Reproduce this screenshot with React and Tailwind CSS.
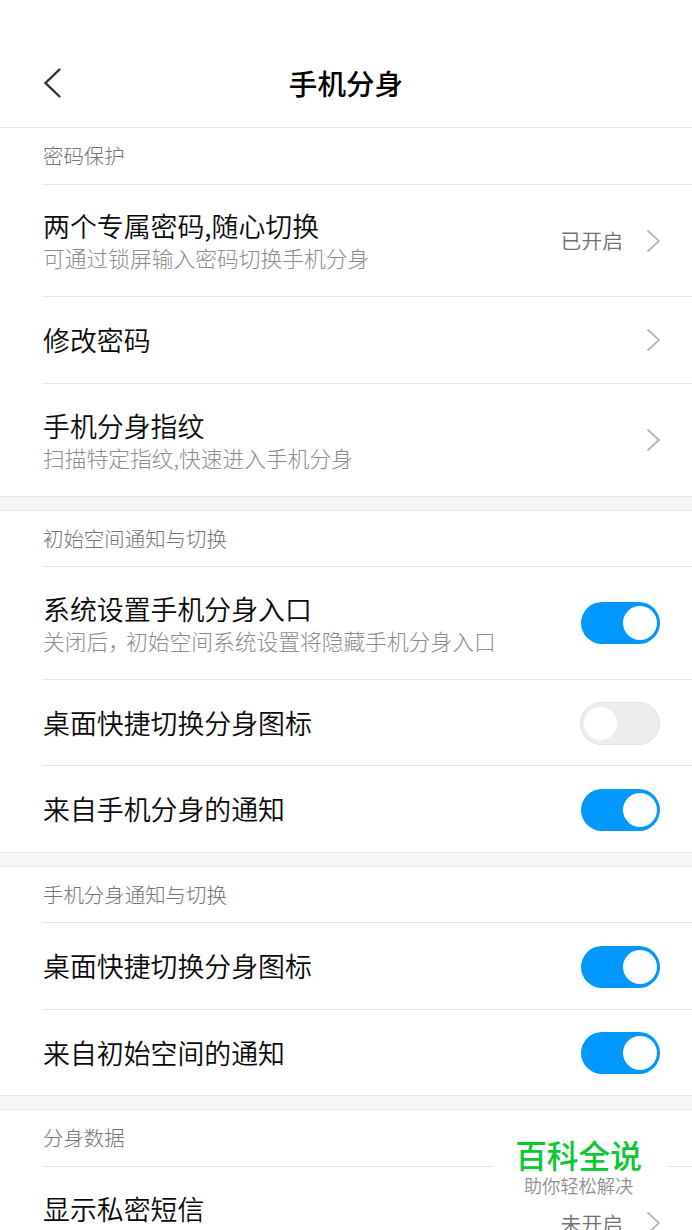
import clsx from 'clsx'

const sections = [
  {
    title: '密码保护',
    height: 'h-[57px]',
    rows: [
      { label: '两个专属密码,随心切换', hint: '可通过锁屏输入密码切换手机分身', value: '已开启', height: 'h-[112px]' },
      { label: '修改密码', height: 'h-[87px]' },
      { label: '手机分身指纹', hint: '扫描特定指纹,快速进入手机分身', height: 'h-[112px]' },
    ],
  },
  {
    title: '初始空间通知与切换',
    height: 'h-[56px]',
    rows: [
      { label: '系统设置手机分身入口', hint: '关闭后，初始空间系统设置将隐藏手机分身入口', on: true, height: 'h-[113px]' },
      { label: '桌面快捷切换分身图标', on: false, height: 'h-[86px]' },
      { label: '来自手机分身的通知', on: true, height: 'h-[86px]' },
    ],
  },
  {
    title: '手机分身通知与切换',
    height: 'h-[56px]',
    rows: [
      { label: '桌面快捷切换分身图标', on: true, height: 'h-[87px]' },
      { label: '来自初始空间的通知', on: true, height: 'h-[85px]' },
    ],
  },
  {
    title: '分身数据',
    height: 'h-[57px]',
    rows: [{ label: '显示私密短信', value: '未开启', height: 'h-[112px]', alignTop: true }],
  },
]

function Chevron() {
  return (
    <svg className="w-[14px] h-6 shrink-0" viewBox="0 0 14 24" fill="none" stroke="#b4b4b4" strokeWidth="1.8">
      <path d="M1.5 1.5 L13 12 L1.5 22.5" />
    </svg>
  )
}

function Toggle({ on, className }) {
  return (
    <span
      role="switch"
      aria-checked={on}
      className={clsx(
        'flex items-center shrink-0 rounded-full',
        on
          ? 'w-[79px] h-[42px] justify-end bg-[#0098ff] pr-[3px]'
          : 'w-20 h-[43px] justify-start bg-[#ededed] border border-[#dfdfdf] pl-[3px]',
        className
      )}
    >
      <span className={clsx('rounded-full bg-white', on ? 'size-[34px]' : 'size-[33px]')} />
    </span>
  )
}

// the full-width comma takes a little less than one em in the hints
function Hint({ text }) {
  const [head, tail] = text.split('，')
  return (
    <p className="text-[21.75px] leading-8 font-light text-[#8c8c8c]">
      {head}
      {tail && <span className="-mr-1">，</span>}
      {tail}
    </p>
  )
}

function Row({ row, last }) {
  const isToggle = row.on !== undefined
  return (
    <div
      className={clsx(
        'flex items-center ml-[42px] pr-8 border-[#e4e4e4]',
        row.height,
        !last && 'border-b'
      )}
    >
      <div className={clsx('flex-1 whitespace-nowrap pl-px', row.hint && 'pt-[3px]')}>
        <p className={clsx('text-[26.9px] leading-8 text-[#0a0a0a]', row.alignTop && '-mt-[28px]')}>{row.label}</p>
        {row.hint && <Hint text={row.hint} />}
      </div>
      {row.value && <span className="-mt-px mr-[23px] text-[20.8px] leading-8 text-[#707070]">{row.value}</span>}
      {isToggle ? <Toggle on={row.on} className={row.hint ? 'mt-0' : 'mt-px'} /> : <Chevron />}
    </div>
  )
}

function Section({ section }) {
  return (
    <section>
      <h2
        className={clsx(
          'flex items-center ml-[42px] pl-px pb-[2px] border-b border-[#e4e4e4] text-[20.45px] leading-8 font-light text-[#747474]',
          section.height
        )}
      >
        {section.title}
      </h2>
      {section.rows.map((row, i) => (
        <Row key={row.label} row={row} last={i === section.rows.length - 1} />
      ))}
    </section>
  )
}

function Watermark() {
  return (
    <div className="absolute left-[494px] top-[1128px] w-[173px] h-[78px] bg-white flex flex-col items-center pt-2 pr-[4px]">
      <span className="text-[31.7px] leading-[37px] font-medium text-[#0bc933]">百科全说</span>
      <span className="text-[18.3px] leading-[25px] text-[#8f8f8f]">助你轻松解决</span>
    </div>
  )
}

export default function App() {
  return (
    <div className="relative w-[692px] h-[1230px] overflow-hidden bg-white font-[350] font-['Noto_Sans_CJK_SC',sans-serif]">
      <header className="grid grid-cols-[1fr_auto_1fr] items-center h-32 pt-[38px] px-[43px] border-b border-[#e4e4e4]">
        <svg className="w-5 h-8" viewBox="0 0 20 32" fill="none" stroke="#333" strokeWidth="2.4" strokeLinecap="round">
          <path d="M16.5 2.5 L2.5 16 L16.5 29.5" />
        </svg>
        <h1 className="text-[28.6px] leading-10 font-medium text-black">手机分身</h1>
      </header>
      {sections.map((section, i) => (
        <div key={section.title}>
          {i > 0 && <div className="h-[15px] bg-[#f6f6f6] border-y border-[#e6e6e6]" />}
          <Section section={section} />
        </div>
      ))}
      <Watermark />
    </div>
  )
}
